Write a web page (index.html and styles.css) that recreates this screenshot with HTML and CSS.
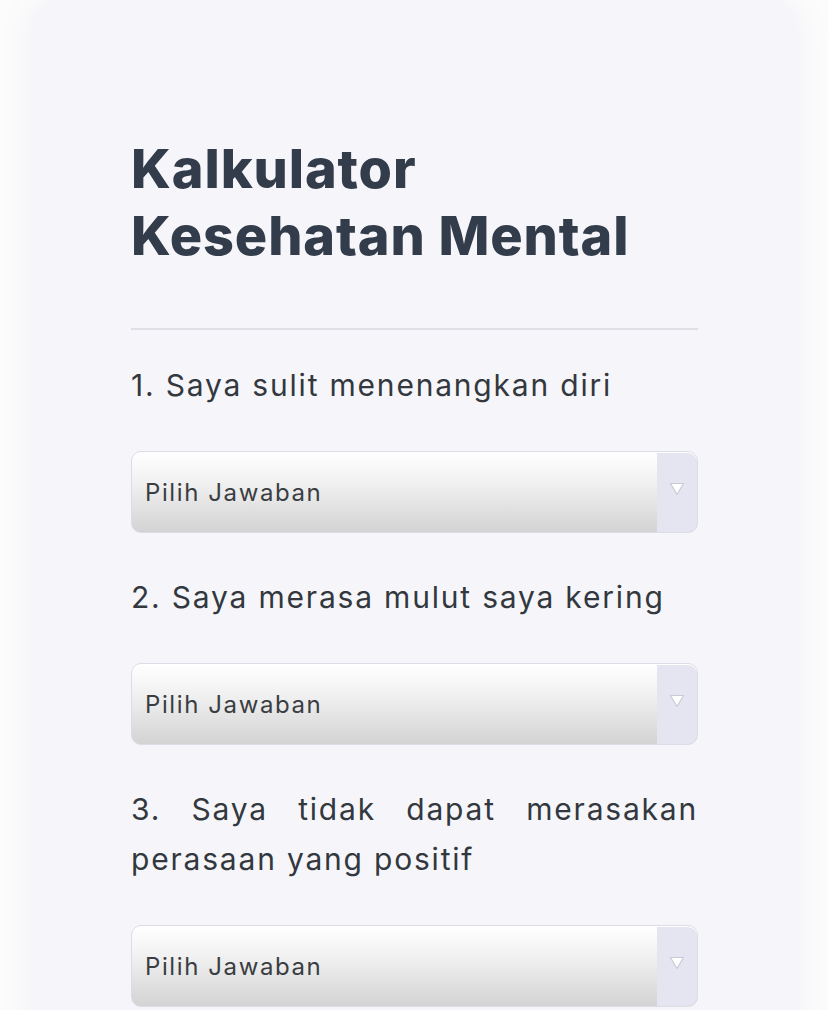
FILE: index.html
```html
<!DOCTYPE html>
<html lang="id">
<head>
  <meta charset="UTF-8" />
  <title>Kalkulator Kesehatan Mental</title>
  <meta name="viewport" content="width=device-width, initial-scale=1.0" />
  <link rel="stylesheet" href="styles.css">
</head>
<body>
  <div class="calculator">
    <h1>Kalkulator Kesehatan Mental</h1>
    <hr class="divider" />

    <div class="question">
      <p class="question-text">1. Saya sulit menenangkan diri</p>
      <div class="select-wrap">
        <select name="q1">
          <option>Pilih Jawaban</option>
        </select>
        <span class="select-arrow">
          <svg width="16" height="14" viewBox="0 0 16 14"><path d="M1.5 1.5 L14.5 1.5 L8 12.5 Z" fill="#fff" stroke="#c9cad6" stroke-width="1.2" stroke-linejoin="round"/></svg>
        </span>
      </div>
    </div>

    <div class="question">
      <p class="question-text">2. Saya merasa mulut saya kering</p>
      <div class="select-wrap">
        <select name="q2">
          <option>Pilih Jawaban</option>
        </select>
        <span class="select-arrow">
          <svg width="16" height="14" viewBox="0 0 16 14"><path d="M1.5 1.5 L14.5 1.5 L8 12.5 Z" fill="#fff" stroke="#c9cad6" stroke-width="1.2" stroke-linejoin="round"/></svg>
        </span>
      </div>
    </div>

    <div class="question">
      <p class="question-text">3. Saya tidak dapat merasakan perasaan yang positif</p>
      <div class="select-wrap">
        <select name="q3">
          <option>Pilih Jawaban</option>
        </select>
        <span class="select-arrow">
          <svg width="16" height="14" viewBox="0 0 16 14"><path d="M1.5 1.5 L14.5 1.5 L8 12.5 Z" fill="#fff" stroke="#c9cad6" stroke-width="1.2" stroke-linejoin="round"/></svg>
        </span>
      </div>
    </div>
  </div>
</body>
</html>
```

FILE: styles.css
```css
* {
  margin: 0;
  padding: 0;
  box-sizing: border-box;
}
body {
  background: #fcfcfd;
  font-family: 'Inter', sans-serif;
  color: #363b44;
  overflow: hidden;
}
.calculator {
  margin: -4px 30px 0 31px;
  background: #f6f6fa;
  border-radius: 36px 36px 0 0;
  padding: 139px 100px 40px 100px;
  box-shadow: 0 0 40px rgba(40, 40, 80, 0.05);
  min-height: 1100px;
}
h1 {
  font-size: 54px;
  font-weight: 800;
  line-height: 67px;
  color: #323c4a;
  letter-spacing: 0.9px;
  width: 540px;
}
.divider {
  border: none;
  height: 2px;
  background: #dfdfe5;
  margin: 59px 0 30px 0;
}
.question {
  margin-bottom: 39px;
}
.question-text {
  font-size: 30px;
  line-height: 50px;
  letter-spacing: 1.8px;
  text-align: justify;
  margin-bottom: 41px;
  color: #33383f;
}
.select-wrap {
  position: relative;
  height: 82px;
}
.select-wrap select {
  appearance: none;
  -webkit-appearance: none;
  width: 100%;
  height: 100%;
  border: 1.5px solid #dcdce6;
  border-radius: 10px;
  background: linear-gradient(to bottom, #ffffff 0%, #f0f0f0 40%, #d3d3d3 100%);
  font-family: 'Inter', sans-serif;
  font-size: 24px;
  letter-spacing: 1.6px;
  color: #3a3d42;
  padding-left: 13px;
  outline: none;
}
.select-arrow {
  position: absolute;
  top: 1.5px;
  right: 1.5px;
  bottom: 1.5px;
  width: 40px;
  background: #e4e5f0;
  border-radius: 0 9px 9px 0;
  display: flex;
  justify-content: center;
  padding-top: 29px;
  pointer-events: none;
}
```
